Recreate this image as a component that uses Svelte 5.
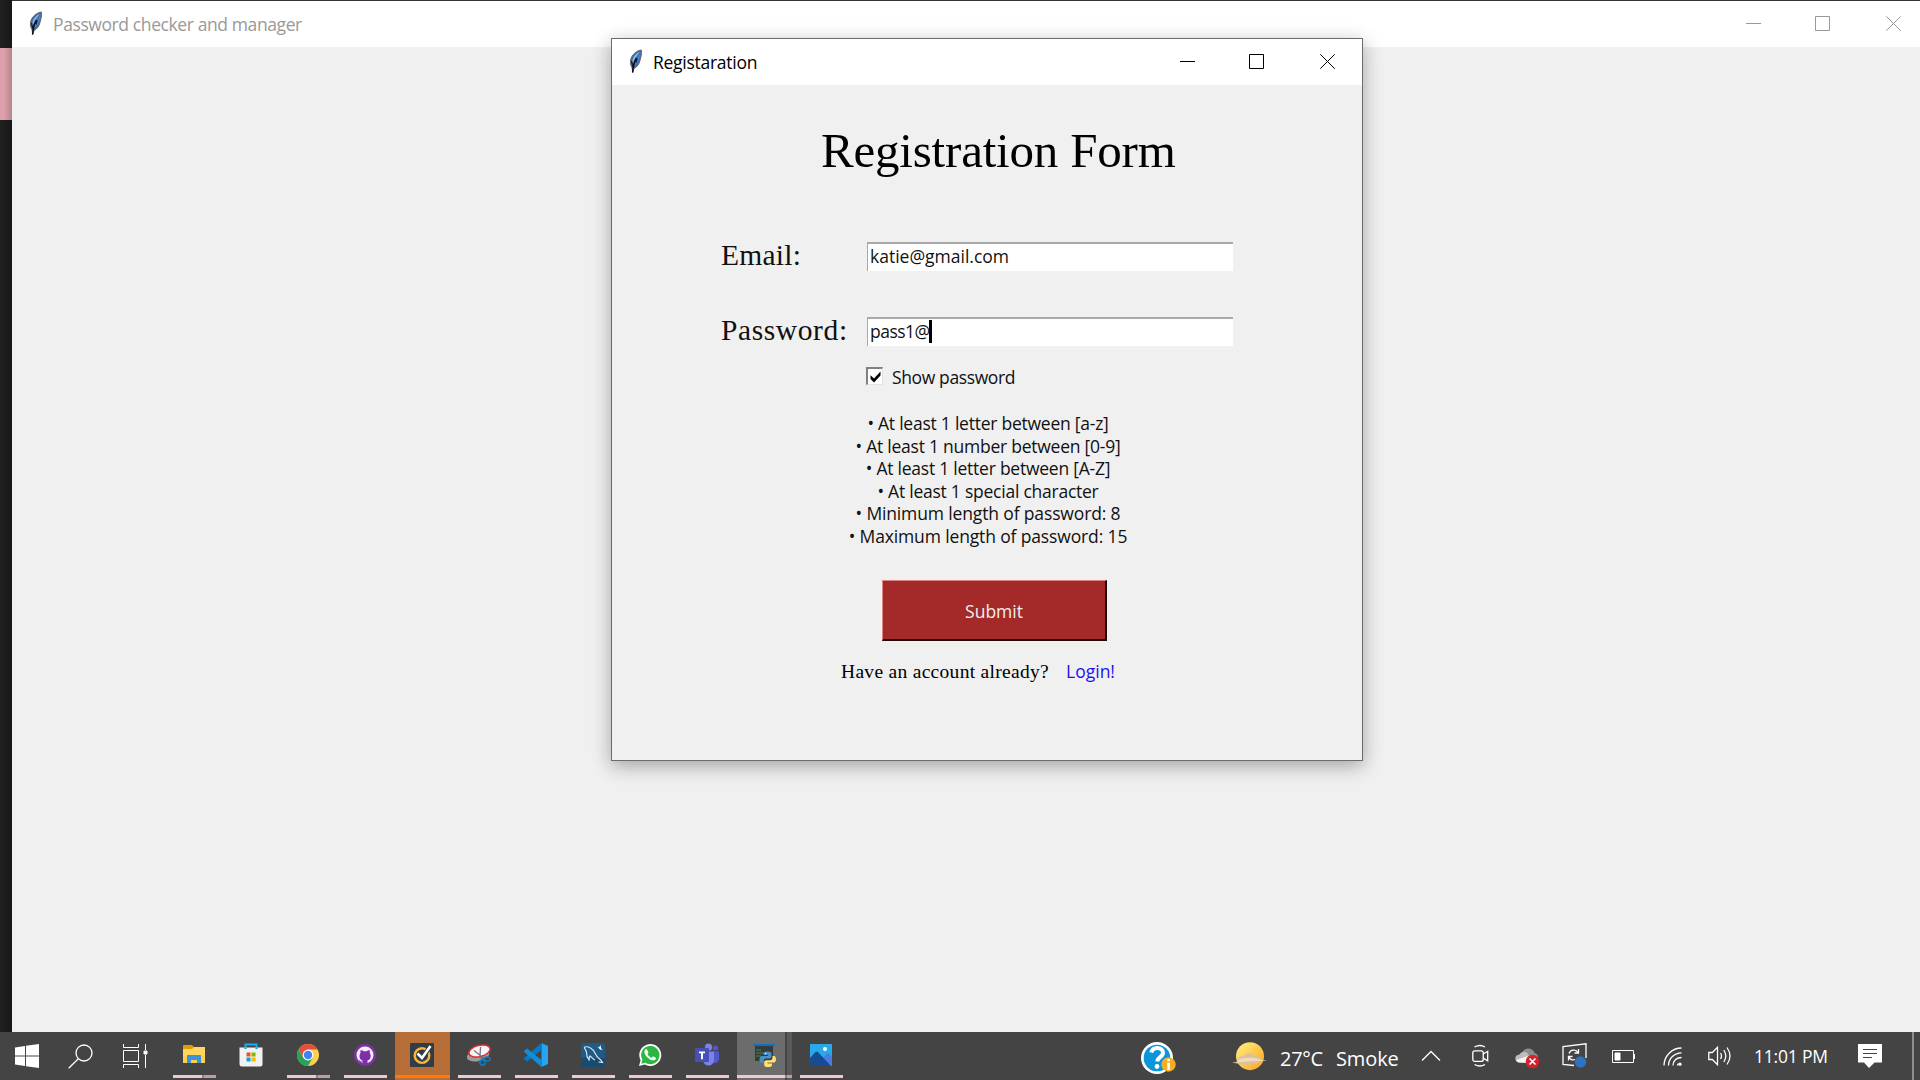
<script>
  let email = 'katie@gmail.com';
  let password = 'pass1@';
  const rules = [
    { text: 'At least 1 letter between [a-z]' },
    { text: 'At least 1 number between [0-9]' },
    { text: 'At least 1 letter between [A-Z]' },
    { text: 'At least 1 special character' },
    { text: 'Minimum length of password: 8', wide: true },
    { text: 'Maximum length of password: 15', wide: true }
  ];
  const apps = [
    { id: 'explorer', stack: true },
    { id: 'store', idle: true },
    { id: 'chrome', stack: true },
    { id: 'github' },
    { id: 'norton', alert: true },
    { id: 'snip' },
    { id: 'code' },
    { id: 'mysql' },
    { id: 'whatsapp' },
    { id: 'teams' },
    { id: 'python', active: true, stack: true },
    { id: 'photos' }
  ];
</script>

{#snippet feather()}
  <svg class="feather" width="16" height="25" viewBox="0 0 16 25">
    <path d="M13.4 1C9 1.500 3.600 5.500 2.600 11c-.6 3.500.3 6 1.600 8l.4 4.500L6 19.500c3-1.500 5-4 6-8 .8-3.500 2.200-7 1.400-10.500z" fill="#3f6ea5" stroke="#6b6963" stroke-width="1" />
    <path d="M11.800 2.800C8 4.500 4.800 8 4.300 12.500l.2 2.500 3-6z" fill="#82b6ec" />
    <path d="M12.500 3c.3 4-2 10-5.700 14l-.8-2c3-3.500 5-7.500 6.500-12z" fill="#4388da" />
    <path d="M8.500 9C6.500 12 5.200 16 4.600 23.500" stroke="#07101c" stroke-width="1.500" fill="none" />
    <path d="M3.500 12l1.500 6M9 9.500l-1 4" stroke="#0d1a2c" stroke-width="1.200" fill="none" />
  </svg>
{/snippet}

{#snippet controls()}
  <div class="controls">
    <svg width="16" height="16" viewBox="0 0 16 16"><path d="M0 7.500h15" /></svg>
    <svg width="16" height="16" viewBox="0 0 16 16"><path d="M.5.500h14v14H.5z" /></svg>
    <svg width="16" height="16" viewBox="0 0 16 16"><path d="M.3.300l14.400 14.400M14.700.300L.3 14.700" /></svg>
  </div>
{/snippet}

{#snippet appIcon(id)}
  <svg width="24" height="24" viewBox="0 0 24 24">
    {#if id === 'explorer'}
      <path d="M1 3q0-1 1-1h8l2 2v3H1z" fill="#e29b00" />
      <path d="M1 6h9l2-2h11v16H1z" fill="#ffd55c" />
      <path d="M1 13h22v7H1z" fill="#fdc843" opacity=".6" />
      <path d="M5 20v-7.500q0-.5.500-.5h13q.5 0 .5.500V20h-4v-3H9v3z" fill="#3b94d9" />
    {:else if id === 'store'}
      <path d="M6.500 6V1.500h11V6" fill="none" stroke="#10b1f2" stroke-width="2" />
      <path d="M.5 4.500h23V21q0 2.500-2.500 2.500H3Q.5 23.500.5 21z" fill="#f1f1f1" />
      <path d="M5.500 4.500h2V6h-2zm11 0h2V6h-2z" fill="#1789c9" />
      <path d="M7.500 9.500h4v4h-4z" fill="#f25022" /><path d="M12.500 9.500h4v4h-4z" fill="#7fba00" />
      <path d="M7.500 14.500h4v4h-4z" fill="#00a4ef" /><path d="M12.500 14.500h4v4h-4z" fill="#ffb900" />
    {:else if id === 'chrome'}
      <circle cx="12" cy="12" r="11" fill="#fdd04b" />
      <path d="M2.470 6.500A11 11 0 0 1 21.530 6.500H12L7.240 14.750z" fill="#e1503f" />
      <path d="M2.470 6.500A11 11 0 0 0 12 23l4.760-8.250L12 17.500l-4.760-2.750z" fill="#27a25a" />
      <circle cx="12" cy="12" r="5.400" fill="#fff" /><circle cx="12" cy="12" r="4.200" fill="#3f83ee" />
    {:else if id === 'github'}
      <circle cx="12" cy="12" r="11" fill="#7f30a8" /><circle cx="12" cy="12" r="8.500" fill="#f4ecf8" />
      <path d="M9.500 21v-3.500C7.500 17.200 6.500 15.500 6.500 13c0-1.300.4-2.200 1-3-.2-1-.1-2 .2-3 1.300.1 2 .6 2.800 1.200h3.200c.8-.6 1.500-1.100 2.800-1.200.3 1 .4 2 .2 3 .6.800 1 1.700 1 3 0 2.500-1 4.200-3.200 4.500V21q-2.500.5-5 0z" fill="#7f30a8" />
      <path d="M9.500 19c-2 .3-2.500-1-3.500-1.600" fill="none" stroke="#7f30a8" />
    {:else if id === 'norton'}
      <rect width="24" height="24" rx="1" fill="#303d49" />
      <circle cx="12" cy="12.500" r="7.300" fill="none" stroke="#fbb331" stroke-width="2.500" />
      <path d="M8 10.500l4 5L20.500 3" fill="none" stroke="#303d49" stroke-width="4.500" />
      <path d="M7.500 10.500l4.500 4.500L20.500 3" fill="none" stroke="#fff" stroke-width="2.600" />
    {:else if id === 'snip'}
      <ellipse cx="11" cy="12.500" rx="11.500" ry="5.500" transform="rotate(-12 11 12.500)" fill="#9b9b9b" />
      <ellipse cx="12.500" cy="8" rx="10.800" ry="5.600" transform="rotate(-14 12.500 8)" fill="#f6f4f4" stroke="#e12c32" stroke-width="1.500" />
      <path d="M7 7.500l9 7M13.500 4l-.5 9" stroke="#77777d" stroke-width="1.300" />
      <circle cx="15.500" cy="19.500" r="2.600" fill="none" stroke="#1478bd" stroke-width="1.600" />
      <ellipse cx="20" cy="16" rx="3" ry="2" fill="none" stroke="#1478bd" stroke-width="1.600" />
      <path d="M14 14l5 5" stroke="#1478bd" stroke-width="1.500" />
    {:else if id === 'code'}
      <path d="M17.500 0L24 3v18l-6.500 3z" fill="#24a4f2" />
      <path d="M17.500 0v7L3 18.500.3 16.200q-.6-.6 0-1.200z" fill="#0879c2" />
      <path d="M17.500 24v-7L3 5.500.3 7.800q-.6.600 0 1.200z" fill="#138ed8" />
    {:else if id === 'mysql'}
      <rect width="24" height="24" rx="2" fill="#205a86" /><path d="M0 15h24v7q0 2-2 2H2q-2 0-2-2z" fill="#194a70" />
      <path d="M3.500 4c4-1 8.500 1.500 10.500 6 1 2 1.500 4 4 5.500 1.500 1 2.500 2 3.500 4l-4-.5M3.500 4c-.5 2 2 3 2 5.500C5.500 12 6 14.500 8 17c.5-2 0-3 1-4 1.500 1 2.500 3 5 4" fill="none" stroke="#d7e4ee" stroke-width="1.200" />
      <path d="M16 3l2 1.500 1.500-2.500.5 3 1.500 2-2.500-.5z" fill="#fff" />
    {:else if id === 'whatsapp'}
      <path d="M1 23l1.600-5.700A11 11 0 1 1 6.800 21.600z" fill="#fff" />
      <path d="M3.200 20.800l1.200-4A9.200 9.200 0 1 1 7.300 19.800z" fill="#2cb742" />
      <path d="M8.800 6.300c-.4-.4-1-.3-1.400.1C5.200 8.700 7 12 9.800 14.700c2.600 2.400 5.700 3.600 7.600 1.700.5-.6.700-1.300.4-1.700L15 13.200l-1.400 1.500c-1.900-.7-3.300-2-4.200-3.800l1.100-1.500z" fill="#fff" />
    {:else if id === 'teams'}
      <circle cx="13.500" cy="4.200" r="3.600" fill="#7b83eb" /><circle cx="20.500" cy="5" r="2.600" fill="#5059c9" />
      <path d="M16 8.500h8v8a4.500 4.500 0 0 1-8 2z" fill="#5059c9" />
      <path d="M8 8.500h11v8.500a5.500 5.500 0 0 1-11 0z" fill="#7b83eb" />
      <rect x="0" y="5" width="14" height="14" rx="1" fill="#4650b7" />
      <path d="M4 8.500h6v1.700H8v6H6v-6H4z" fill="#fff" />
    {:else if id === 'python'}
      <path d="M3 1h18v17H3z" fill="#3a3a3a" /><path d="M1 1h22v2H1z" fill="#0a73c0" />
      <path d="M4 7h5M4 10h8M4 13h5" stroke="#3d8d3c" stroke-width="1.200" />
      <path d="M15.500 8.500c-3 0-4 .7-4 2.300V12h4.500v1h-6c-1.700 0-2.500 1.500-2.500 3.500s1 3.500 2.500 3.500h1.500v-2c0-1.500 1-2.500 2.500-2.500h3.500c1.500 0 2-1 2-2v-2.700c0-1.600-1-2.300-4-2.300z" fill="#4a8fc6" />
      <path d="M16 24c3 0 4-.7 4-2.300V20.500h-4.500v-1H22c1.300 0 2-1.500 2-3.200S23.200 13 22 13h-1.500v1.700c0 1.600-1 2.500-2.500 2.500h-3.500c-1.500 0-2.300.8-2.300 2v2.500c0 1.600 1 2.300 3.800 2.300z" fill="#ffe16b" />
      <circle cx="13.500" cy="10.500" r=".7" fill="#fff" />
    {:else}
      <path d="M1 1h22v22H1z" fill="#27a9ea" /><path d="M12 17l6-6.500q1-.8 2 0l3 3.500v9H12z" fill="#4a7de0" />
      <path d="M1 15l5.500-6q1.200-1 2.400 0L22 23H1z" fill="#174b92" /><circle cx="16" cy="6" r="2" fill="#fff" />
    {/if}
  </svg>
{/snippet}

<div class="desktop">
  <div class="backdrop">
    <div class="edge"><i></i></div>
    <section class="main-window">
      <header class="titlebar inactive">
        {@render feather()}
        <span class="caption">Password checker and manager</span>
        {@render controls()}
      </header>
    </section>
  </div>

  <section class="dialog">
    <header class="titlebar">
      {@render feather()}
      <span class="caption">Registaration</span>
      {@render controls()}
    </header>
    <h1>Registration Form</h1>
    <div class="field">
      <span class="label">Email:</span>
      <div class="input">{email}</div>
    </div>
    <div class="field second">
      <span class="label spaced">Password:</span>
      <div class="input tight">{password}<i class="caret"></i></div>
    </div>
    <div class="show">
      <span class="box"><svg width="11" height="12" viewBox="0 0 11 12"><path d="M.5 4.200L4 7.500 10.500.500v4L4 11.500.5 8z" /></svg></span>
      <span>Show password</span>
    </div>
    <ul>
      {#each rules as rule}
        <li class:wide={rule.wide}>• {rule.text}</li>
      {/each}
    </ul>
    <button>Submit</button>
    <div class="foot"><span class="ask">Have an account already?</span><span class="login">Login!</span></div>
  </section>

  <footer class="taskbar">
    <div class="starters">
      <span><svg width="24" height="24" viewBox="0 0 24 24"><path d="M0 3.400L10 2v9.500H0zM11 1.800L24 0v11.500H11zM0 12.500h10V22L0 20.600zM11 12.500h13V24l-13-1.800z" fill="#fff" /></svg></span>
      <span><svg width="26" height="25" viewBox="0 0 26 25" class="line"><circle cx="16" cy="9" r="8" /><path d="M10.300 14.700L.7 24.300" /></svg></span>
      <span><svg width="26" height="24" viewBox="0 0 26 24" class="line crisp"><path d="M1.500 0v3.500h15V0M1.500 6.500h15v11h-15zM1.500 24v-3.500h15V24M23.500 0v6M23.500 11v13" /><path d="M22 7h3v3h-3z" class="solid" /></svg></span>
    </div>
    <div class="apps">
      {#each apps as app}
        <div class="app" class:idle={app.idle} class:stack={app.stack} class:alert={app.alert} class:active={app.active}>
          {@render appIcon(app.id)}
        </div>
      {/each}
    </div>
    <div class="tray">
      <svg class="help" width="36" height="34" viewBox="0 0 36 34">
        <circle cx="16" cy="16" r="16" fill="#fff" /><circle cx="16" cy="16" r="13.300" fill="#0c95d8" />
        <path d="M10.300 10.500c.8-3.200 3-4.500 5.900-4.500 3.400 0 5.800 1.800 5.800 4.800 0 4.500-5.600 4.300-5.600 8.700" fill="none" stroke="#fff" stroke-width="4" />
        <circle cx="16" cy="24.500" r="2.400" fill="#fff" />
        <circle cx="27.500" cy="22.500" r="7.200" fill="#f6ae20" /><path d="M26.300 17h2.600v2.300h-2.600zM26.300 20.800h2.600V28h-2.600z" fill="#fff" />
      </svg>
      <svg class="weather" width="36" height="30" viewBox="0 0 36 30">
        <defs><linearGradient id="sun" x1="0" y1="0" x2="1" y2="1"><stop offset=".2" stop-color="#ffe36e" /><stop offset="1" stop-color="#fba21d" /></linearGradient></defs>
        <circle cx="18" cy="14.200" r="14" fill="url(#sun)" />
        <path d="M6 17c2-4 5-2.500 6.500-3.500 3-4 8-3 9.500.5 4-.5 6 1 7 3.500l6 1-7 1c-1 2-3 2.500-6 3H12c-4 0-5-.5-6-1l-6-.7 5-1.300c0-1 .5-1.800 1-2.500z" fill="#d7bfa4" opacity=".88" />
        <path d="M7 17c5-.5 13-3 22 .5l2 1c-9 1.500-18 0-27 3" fill="#fff1df" opacity=".5" />
      </svg>
      <span class="temp">27°C</span><span class="cond">Smoke</span>
      <svg class="line chev" width="20" height="12" viewBox="0 0 20 12"><path d="M1 10.500l9-9 9 9" /></svg>
      <svg class="line meet" width="17" height="24" viewBox="0 0 17 24"><rect x=".8" y="6.800" width="10.400" height="10.600" rx="2" /><path d="M11.200 10l4.500-2.700v9.500l-4.500-2.700M2.500 3Q8 0 13 3M2.500 20.500q5.500 3 10.500 0" /></svg>
      <svg class="cloud" width="25" height="22" viewBox="0 0 25 22">
        <path d="M7 6c2-6 11-6 12.500 0 2 .2 3.500 2 3.500 4.500L8 10z" fill="#8d8d8d" />
        <path d="M4 15.500C-1 14.500-1 8 4.500 7.500 7 3.500 12 4 13.500 8l6 5-3 3z" fill="#bdbdbd" />
        <path d="M4 15.500C2 15 1 14 1 13L13 9l3 7z" fill="#f4f4f4" />
        <circle cx="17.500" cy="14.500" r="6.800" fill="#d7222d" /><path d="M14.500 11.500l6 6m0-6l-6 6" stroke="#fff" stroke-width="1.600" />
      </svg>
      <svg class="line sync" width="26" height="25" viewBox="0 0 26 25">
        <path d="M12 22.500L1 21.300V3.500L24 .8V15M7 10.500c1.500-4 7-4.500 9-1M16.500 6v4h-4M6.500 17.500v-4h4M7 14c1 2.500 3.500 3.500 6 2.500" /><circle cx="18.500" cy="19" r="5.700" fill="#2d73c0" stroke="none" />
      </svg>
      <svg class="line battery crisp" width="24" height="14" viewBox="0 0 24 14"><path d="M.5.500h21v12H.5zM22.500 4v5" /><path class="solid" d="M3 3h5v7H3z" /></svg>
      <svg class="line wifi" width="20" height="20" viewBox="0 0 20 20"><path d="M1 18.500C1 9 9 1 18.500 1M5.500 18.500c0-7 6-12.700 13-12.700M10 18.500c0-4.500 3.500-8 8.500-8M14.500 18.500c0-1 .5-1.500 1-2" /><circle cx="17" cy="17.200" r="1.600" class="solid" stroke="none" /></svg>
      <svg class="line sound" width="24" height="20" viewBox="0 0 24 20"><path d="M.8 6.500h3.500L9.500 1.300v17.400l-5.200-5.200H.8zM12.500 7q2 3 0 6M15.800 4q4 6 0 12M19 1.500q6 8.500 0 17" /></svg>
      <span class="clock">11:01 PM</span>
      <svg class="note" width="24" height="24" viewBox="0 0 24 24"><path d="M0 0h24v18.500h-7.500L11 24l-5-5.500H0z" fill="#fff" /><path d="M5 5.500h14M5 9.500h14M5 13.500h9" stroke="#444" stroke-width="1.200" /></svg>
      <i class="peek"></i>
    </div>
  </footer>
</div>

<style>
  :global(body) { margin: 0; overflow: hidden; }
  .desktop {
    position: relative; display: flex; flex-direction: column;
    width: 1920px; height: 1080px; overflow: hidden;
    font: 17.5px/22px "Open Sans", "Noto Sans", sans-serif; color: #111; white-space: nowrap;
  }
  svg { flex: none; display: block; }
  .backdrop { display: flex; height: 1032px; }
  .edge { box-sizing: border-box; width: 12px; padding-top: 48px; background: linear-gradient(90deg, #202020, #171717); }
  .edge i { display: block; height: 72px; background: linear-gradient(90deg, #dca0aa 35%, #b5848d); }
  .main-window { flex: 1; background: #f0f0f0; border-top: 1px solid #333; }

  .titlebar { display: flex; height: 46px; background: #fff; color: #000; }
  .feather { margin: 10px 9px 0 16px; }
  .caption { line-height: 46px; letter-spacing: -.27px; }
  .inactive { color: #999; }
  .inactive .caption { letter-spacing: -.4px; }
  .controls { display: flex; gap: 54px; margin: 15px 18px 0 auto; fill: none; stroke: #000; }
  .controls svg:nth-child(2) { margin: 0 1px 0 -1px; }
  .dialog .controls { margin-right: 26px; }
  .inactive .controls { stroke: #999; }

  .dialog {
    position: absolute; left: 611px; top: 38px; box-sizing: border-box;
    width: 752px; height: 723px; border: 1px solid #6c6c6c; background: #f0f0f0;
    box-shadow: 0 5px 18px rgba(0, 0, 0, .32);
  }
  h1 {
    margin: 36px 0 0 209px; font: 49px/60px "Liberation Serif", serif;
    letter-spacing: -.2px; color: #000;
  }
  .field { display: flex; margin: 61px 0 0 109px; height: 29px; }
  .field.second { margin-top: 46px; }
  .label { width: 146px; padding-top: 1px; font: 29.500px/24px "Liberation Serif", serif; letter-spacing: .25px; }
  .spaced { letter-spacing: .6px; }
  .input {
    display: flex; box-sizing: border-box; width: 366px; padding-left: 2px; background: #fff;
    border-top: 2px solid #a9a9a9; border-left: 1.500px solid #a9a9a9; line-height: 25px;
  }
  .tight { letter-spacing: -.5px; }
  .caret { width: 3px; height: 23px; margin: 1px 0 0 -.5px; background: #000; }
  .show { display: flex; gap: 9px; height: 20px; margin: 21px 0 0 254px; line-height: 20px; letter-spacing: -.38px; }
  .box {
    display: grid; place-items: center; box-sizing: border-box; width: 17px; height: 18px;
    background: #fff; border: 1px solid #e3e3e3; border-top: 2px solid #808080; border-left: 2px solid #808080;
  }
  ul { width: 300px; margin: 25px 0 0 226px; padding: 0; list-style: none; text-align: center; line-height: 22.500px; letter-spacing: -.24px; }
  li.wide { letter-spacing: -.14px; }
  button {
    display: block; box-sizing: border-box; width: 225px; height: 61px; margin: 33px 0 0 270px; padding: 1px 0 0;
    background: #a42a2a; color: #efefef; font: inherit;
    border: 1.500px solid; border-color: #df8585 #240909 #240909 #df8585; border-right-width: 2px; border-bottom-width: 2px;
  }
  .foot { display: flex; gap: 17px; height: 22px; margin: 19px 0 0 229px; }
  .ask { font: 19.500px/24px "Liberation Serif", serif; letter-spacing: .3px; color: #000; }
  .login { color: #1c10f5; }

  .taskbar { display: flex; height: 48px; background: #444; color: #fff; }
  .starters { display: flex; margin-right: 5px; }
  .starters span { display: grid; place-items: center; width: 54px; height: 48px; }
  .apps { display: flex; gap: 2px; }
  .app {
    position: relative; display: flex; justify-content: flex-start; align-items: flex-start;
    box-sizing: border-box; width: 55px; height: 48px; padding: 11px 0 0 15px;
  }
  .app::after { content: ""; position: absolute; left: 6px; bottom: 2px; width: 43px; height: 3px; background: #f0c8cd; }
  .stack::after { background: linear-gradient(90deg, #f0c8cd 29px, #947c80 29px 31px, #bf9ea3 31px); }
  .idle::after { display: none; }
  .alert { background: #b76e36; }
  .alert::after { left: 0; width: 55px; background: #ff7a0a; }
  .active { background: linear-gradient(90deg, #6c6c6c 48px, #454545 48px 50px, #5a5a5a 50px); }
  .active::after { left: 0; width: 55px; background: linear-gradient(90deg, #f0c8cd 48px, #947c80 48px 50px, #bf9ea3 50px); }

  .tray { display: flex; flex: 1; justify-content: flex-end; align-items: flex-start; }
  .line { fill: none; stroke: #fff; stroke-width: 1.300; }
  .crisp { stroke-width: 1; }
  .solid { fill: #fff; }
  .help { margin: 10px 55px 0 0; }
  .weather { margin: 10px 12px 0 0; }
  .temp { width: 56px; font-size: 20px; line-height: 53px; letter-spacing: -.3px; }
  .cond { width: 85px; font-size: 20px; line-height: 53px; letter-spacing: -.1px; }
  .chev { margin: 18px 31px 0 0; }
  .meet { margin: 12px 26px 0 0; }
  .cloud { margin: 15px 22px 0 0; }
  .sync { margin: 11px 24px 0 0; }
  .battery { margin: 18px 27px 0 0; }
  .wifi { margin: 15px 25px 0 0; }
  .sound { margin: 14px 22px 0 0; }
  .clock { width: 104px; line-height: 48px; letter-spacing: -.2px; }
  .note { margin: 12px 30px 0 0; }
  .peek { width: 2px; height: 48px; margin-right: 6px; background: #8d8d8d; }
</style>
